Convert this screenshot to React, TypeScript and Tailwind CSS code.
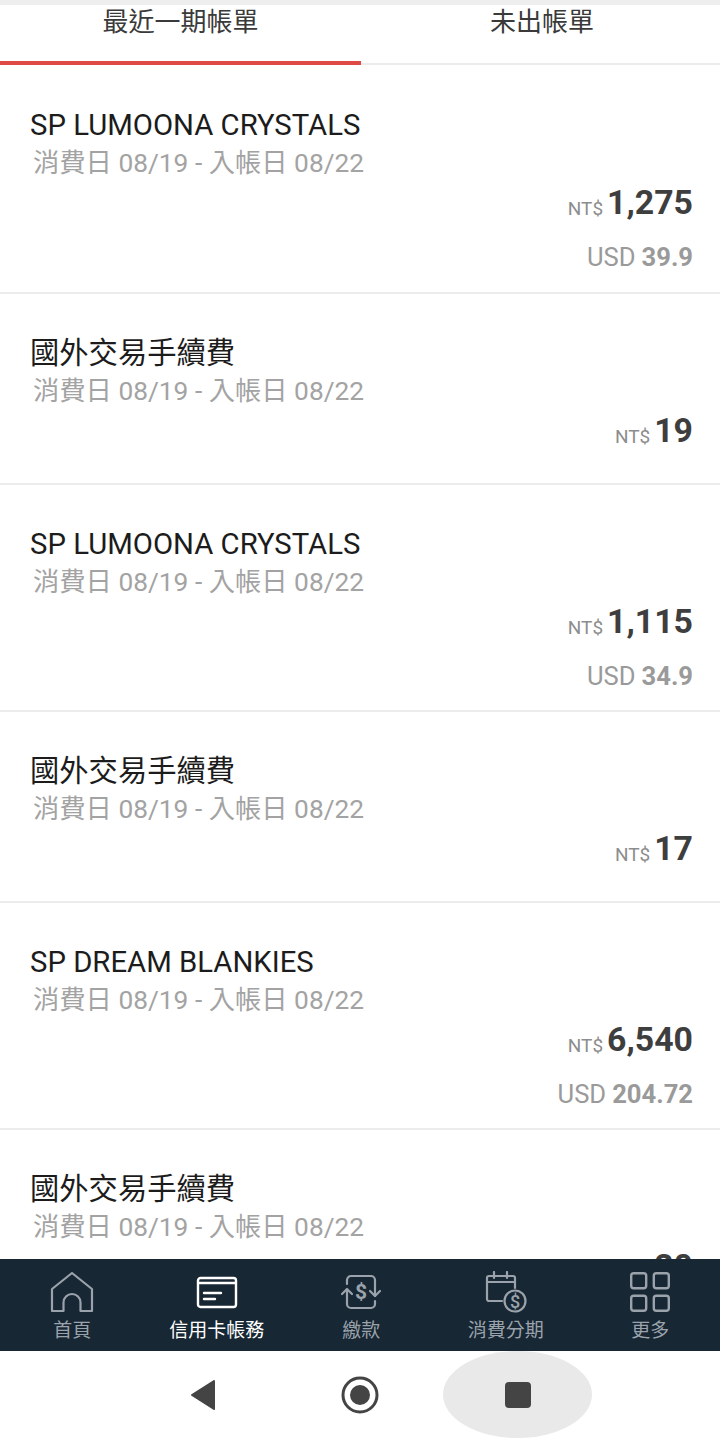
const SANS = 'font-["Roboto","Noto_Sans_CJK_TC",sans-serif]'

type Row = { name: string; nt: string; usd?: string }

const rows: Row[] = [
  { name: 'SP LUMOONA CRYSTALS', nt: '1,275', usd: '39.9' },
  { name: '國外交易手續費', nt: '19' },
  { name: 'SP LUMOONA CRYSTALS', nt: '1,115', usd: '34.9' },
  { name: '國外交易手續費', nt: '17' },
  { name: 'SP DREAM BLANKIES', nt: '6,540', usd: '204.72' },
  { name: '國外交易手續費', nt: '20' },
]

function TxRow({ row }: { row: Row }) {
  return (
    <div className={`border-b-2 border-[#ececec] pl-[30px] pr-[27px] pt-[41px] first:h-[229px] first:pt-[42px] ${row.usd ? 'h-[227px]' : 'h-[191px]'}`}>
      <div className="h-[36px] text-[29.3px] leading-[36px] text-[#1c1c1c] whitespace-nowrap">{row.name}</div>
      <div className="h-[40px] pl-[3px] text-[26.3px] leading-[40px] text-[#a3a3a3] whitespace-nowrap">消費日 08/19 - 入帳日 08/22</div>
      <div className="flex h-[40px] items-center justify-end text-[#3e3e3e]">
        <span className="mr-[4px] mt-[13px] text-[19px] text-[#8d8d8d]">NT$</span>
        <span className="text-[33.8px] font-bold leading-[40px]">{row.nt}</span>
      </div>
      {row.usd && (
        <div className="mt-[18px] flex h-[32px] justify-end gap-[6px] text-[25.6px] leading-[32px] text-[#9a9a9a]">
          <span>USD</span>
          <span className="font-bold">{row.usd}</span>
        </div>
      )}
    </div>
  )
}

function NavItem({ label, active, children }: { label: string; active?: boolean; children: React.ReactNode }) {
  return (
    <div className={`flex w-[144.5px] shrink-0 flex-col items-center ${active ? 'text-white' : 'text-[#9aa3ab]'}`}>
      <div className="flex h-[44px] items-center justify-center">{children}</div>
      <div className="mt-[4px] text-[19px] leading-[26px]">{label}</div>
    </div>
  )
}

export default function App() {
  return (
    <div className={`flex h-[1438px] w-[720px] flex-col overflow-hidden bg-white ${SANS}`}>
      <div className="h-[5px] shrink-0 bg-[#eeeeee]" />
      <div className="flex h-[60px] shrink-0 border-b-2 border-[#ececec] text-[26px] leading-[34px] text-[#3a3a3a]">
        <div className="h-[60px] w-[361px] border-b-4 border-[#df4a47] text-center">最近一期帳單</div>
        <div className="flex-1 pl-[3px] text-center">未出帳單</div>
      </div>
      <div className="relative min-h-0 flex-1 overflow-hidden">
        {rows.map((row, i) => (
          <TxRow key={i} row={row} />
        ))}
      </div>
      <div className="flex h-[92px] shrink-0 items-start overflow-hidden bg-[#182734] pt-[11px]">
        <NavItem label="首頁">
          <svg width="44" height="42" viewBox="0 0 44 42" fill="none" stroke="currentColor" strokeWidth="2.2" strokeLinejoin="round">
            <path d="M2 18 22 2l20 16v22H30.500v-8.500a8.500 8.500 0 0 0-17 0V40H2Z" />
          </svg>
        </NavItem>
        <NavItem label="信用卡帳務" active>
          <svg width="42" height="33" viewBox="0 0 42 33" fill="none" stroke="currentColor" strokeWidth="2.4" strokeLinecap="round">
            <rect x="2" y="2" width="38" height="29" rx="2.500" />
            <path d="M3 7h36M8 17h17M8 23h11" />
          </svg>
        </NavItem>
        <NavItem label="繳款">
          <svg width="42" height="36" viewBox="0 0 42 36" fill="none" stroke="currentColor" strokeWidth="2.2" strokeLinecap="round" strokeLinejoin="round">
            <path d="M7 10V6a4 4 0 0 1 4-4h20a4 4 0 0 1 4 4v16" />
            <path d="M7 27v3a4 4 0 0 0 4 4h20a4 4 0 0 0 4-4v-3" />
            <path d="M7 27V16M2 20l5-5 5 5M30 17l5 5 5-5" />
            <text x="21" y="24.500" textAnchor="middle" fontSize="21" fontWeight="700" fill="currentColor" stroke="none" fontFamily="Roboto, sans-serif">$</text>
          </svg>
        </NavItem>
        <NavItem label="消費分期">
          <svg width="42" height="42" viewBox="0 0 42 42" fill="none" stroke="currentColor" strokeWidth="2.2" strokeLinecap="round">
            <path d="M17 30H4a2 2 0 0 1-2-2V7a2 2 0 0 1 2-2h24a2 2 0 0 1 2 2v10M2 11h28M9 1v6M22 1v6" />
            <circle cx="30" cy="30" r="10.500" />
            <text x="30" y="36.500" textAnchor="middle" fontSize="18" fontWeight="500" fill="currentColor" stroke="none" fontFamily="Roboto, sans-serif">$</text>
          </svg>
        </NavItem>
        <NavItem label="更多">
          <svg width="40" height="40" viewBox="0 0 40 40" fill="none" stroke="currentColor" strokeWidth="2.4">
            <rect x="1.200" y="1.200" width="15" height="15" rx="2.500" />
            <rect x="23.800" y="1.200" width="15" height="15" rx="2.500" />
            <rect x="1.200" y="23.800" width="15" height="15" rx="2.500" />
            <rect x="23.800" y="23.800" width="15" height="15" rx="2.500" />
          </svg>
        </NavItem>
      </div>
      <div className="flex h-[87px] shrink-0 items-center bg-white">
        <div className="flex w-[443px] items-center justify-end gap-[125px] pr-[64px]">
          <svg width="26" height="32" viewBox="0 0 26 32" fill="#444444" stroke="#444444" strokeWidth="2" strokeLinejoin="round"><path d="M24 2 2 16l22 14Z" /></svg>
          <svg width="38" height="38" viewBox="0 0 38 38" fill="none">
            <circle cx="19" cy="19" r="17" stroke="#444444" strokeWidth="3" />
            <circle cx="19" cy="19" r="10" fill="#444444" />
          </svg>
        </div>
        <div className="flex h-[87px] w-[149px] items-center justify-center rounded-[50%] bg-[#e9e9e9]">
          <div className="h-[26px] w-[26px] rounded-[4px] bg-[#444444]" />
        </div>
      </div>
    </div>
  )
}
